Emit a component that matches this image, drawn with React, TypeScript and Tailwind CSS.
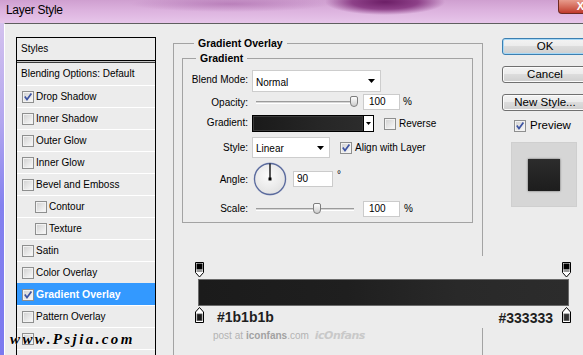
import React from "react";

function Checkbox({ checked = false }: { checked?: boolean }) {
  return (
    <span className="relative block w-[12px] h-[12px] shrink-0 border border-[#8e8f8f] bg-linear-to-br from-[#d0d0d0] to-[#fbfbfb] shadow-[inset_0_0_0_1px_#f2f2f2]">
      {checked ? (
        <svg className="absolute left-0 top-0" width="10" height="10" viewBox="0 0 10 10">
          <path d="M1.8 4.6 L4 7.6 L8.4 1.6" fill="none" stroke="#3d54a3" strokeWidth="1.7" />
        </svg>
      ) : null}
    </span>
  );
}

function Arrow() {
  return (
    <svg width="7" height="4" viewBox="0 0 7 4" className="block shrink-0">
      <path d="M0 0 H7 L3.5 4 Z" fill="#000" />
    </svg>
  );
}

function Label({ children, extra = "" }: { children: React.ReactNode; extra?: string }) {
  return <span className={`w-[65px] shrink-0 text-right ${extra}`}>{children}</span>;
}

function Slider({ size, thumb }: { size: string; thumb: string }) {
  return (
    <div className={`relative h-[16px] shrink-0 ${size}`}>
      <div className="absolute left-0 right-0 top-[7px] h-[3px] border-t border-b border-t-[#9b9b9b] border-b-white bg-[#d6d6d6]" />
      <div
        className={`absolute top-[2px] w-[8px] h-[11px] rounded-t-[2px] rounded-b-[4px] border border-[#7d7d7d] bg-linear-to-b from-[#fdfdfd] to-[#cdcdcd] ${thumb}`}
      />
    </div>
  );
}

function Field({ size, pad, children }: { size: string; pad: string; children: React.ReactNode }) {
  return (
    <div className={`h-[16px] shrink-0 bg-white border border-[#cbcbcb] leading-[14px] ${size} ${pad}`}>
      {children}
    </div>
  );
}

function TopStop() {
  return (
    <svg width="9" height="16" viewBox="0 0 9 16" className="block">
      <path d="M0.5 0.5 H8.5 V10.5 L4.5 15 L0.5 10.5 Z" fill="#fff" stroke="#000" />
      <rect x="1.5" y="1.5" width="6" height="6" fill="#000" />
      <rect x="1.5" y="7.5" width="6" height="2.5" fill="#9a9a9a" />
    </svg>
  );
}

function BottomStop({ color }: { color: string }) {
  return (
    <svg width="9" height="16" viewBox="0 0 9 16" className="block">
      <path d="M4.5 0.5 L8.5 5 V15.5 H0.5 V5 Z" fill="#fff" stroke="#000" />
      <rect x="2" y="7" width="5" height="6.5" fill={color} stroke="#555" strokeWidth="0.8" />
    </svg>
  );
}

const styleRows: { label: string; checked?: boolean; indent?: boolean; active?: boolean }[] = [
  { label: "Drop Shadow", checked: true },
  { label: "Inner Shadow" },
  { label: "Outer Glow" },
  { label: "Inner Glow" },
  { label: "Bevel and Emboss" },
  { label: "Contour", indent: true },
  { label: "Texture", indent: true },
  { label: "Satin" },
  { label: "Color Overlay" },
  { label: "Gradient Overlay", checked: true, active: true },
  { label: "Pattern Overlay" },
  { label: "" },
];

function Button({ children, primary = false }: { children: React.ReactNode; primary?: boolean }) {
  return (
    <div
      className={`h-[17px] w-[86px] rounded-[3px] border text-center text-[11.5px] leading-[15px] text-black bg-[linear-gradient(180deg,#f3f3f3_0%,#ebebeb_50%,#dcdcdc_50%,#cfcfcf_100%)] ${
        primary
          ? "border-[#3c7fb1] shadow-[inset_0_0_0_1px_#a6d8f6]"
          : "border-[#707070] shadow-[inset_0_0_0_1px_#fbfbfb]"
      }`}
    >
      {children}
    </div>
  );
}

export default function App() {
  return (
    <div className="relative w-[583px] h-[355px] overflow-hidden bg-[#ececec] font-['Liberation_Sans',Arial,sans-serif] text-[10px] text-black">
      {/* Title bar */}
      <div className="relative h-[23px] bg-[image:radial-gradient(ellipse_60px_13px_at_385px_2px,#6c1e66_0%,#8d4088_55%,rgba(200,150,200,0)_100%),radial-gradient(ellipse_100px_8px_at_230px_4px,rgba(160,90,160,0.5),rgba(160,90,160,0)),linear-gradient(180deg,#cf9fd0_0%,#dcb2de_45%,#e7c6ea_100%)]">
        <div className="pl-[6px] pt-[3px] text-[12px] leading-[14px] tracking-[-0.3px] text-black">Layer Style</div>
        <div className="absolute right-[-20px] top-0 w-[45px] h-[14px] rounded-bl-[4px] border border-t-0 border-[#6d2a22] bg-linear-to-b from-[#e79b8c] to-[#c0392b] text-center text-[11px] font-bold leading-[13px] text-white">
          X
        </div>
      </div>

      <div className="flex h-[332px]">
        {/* left desktop strip */}
        <div className="w-[4px] shrink-0 bg-[linear-gradient(180deg,#d4c2ee_0%,#b2a6ef_30%,#8481ef_55%,#7b79ef_100%)]" />

        {/* dialog body */}
        <div className="flex flex-1 items-start border-t border-l border-t-[#5f5f5f] border-l-white bg-[#ececec] pl-[11px] pt-[13px]">
          {/* Styles list */}
          <div className="w-[140px] h-[340px] shrink-0 border border-black">
            <div className="h-[22px] pl-[4px] leading-[22px]">Styles</div>
            <div className="h-[1px] bg-black" />
            <div className="h-[1px] bg-[#c4c4c4]" />
            <div className="h-[1px] bg-[#3a3a3a]" />
            <div className="h-[22px] pl-[4px] leading-[21px]">Blending Options: Default</div>
            {styleRows.map((r, i) => (
              <div
                key={i}
                className={`flex h-[22px] items-center border-t ${r.indent ? "pl-[18px]" : "pl-[5px]"} ${
                  r.active ? "border-t-[#3399ff] bg-[#3399ff] text-[10.5px] font-bold text-white" : "border-t-white"
                }`}
              >
                <Checkbox checked={r.checked} />
                {r.label ? <span className="ml-[2px]">{r.label}</span> : null}
              </div>
            ))}
            <div className="h-[22px] border-t border-t-white" />
          </div>

          {/* Gradient Overlay fieldset */}
          <fieldset className="ml-[17px] w-[310px] h-[330px] shrink-0 border border-[#a3a3a3] pl-[8px] pr-[9px]">
            <legend className="ml-[12px] px-[4px] text-[10.5px] font-bold leading-[12px]">Gradient Overlay</legend>
            <fieldset className="mt-[3px] border border-[#a3a3a3] pb-[5px]">
              <legend className="ml-[13px] px-[4px] text-[10.5px] font-bold leading-[12px]">Gradient</legend>

              {/* Blend mode */}
              <div className="mt-[6px] flex h-[22px] items-center">
                <Label extra="mb-[4px]">Blend Mode:</Label>
                <div className="ml-[4px] flex h-[22px] w-[129px] items-center justify-between border border-[#cdcdcd] bg-white pl-[3px] pr-[5px]">
                  <span className="mt-[2px]">Normal</span>
                  <Arrow />
                </div>
              </div>

              {/* Opacity */}
              <div className="mt-[2px] flex h-[16px] items-center">
                <Label>Opacity:</Label>
                <Slider size="ml-[8px] w-[101px]" thumb="left-[94px]" />
                <Field size="ml-[6px] w-[37px]" pad="pl-[5px]">100</Field>
                <span className="ml-[3px] mb-[2px]">%</span>
              </div>

              {/* Gradient */}
              <div className="mt-[5px] flex h-[17px] items-center">
                <Label extra="mb-[2px]">Gradient:</Label>
                <div className="ml-[4px] flex h-[17px] w-[122px] shrink-0 border border-black">
                  <div className="flex-1 border border-[#3a3a3a] bg-[linear-gradient(90deg,#1a1a1a,#262626_60%,#2c2c2c)]" />
                  <div className="flex w-[10px] items-center justify-center border-l border-black bg-white">
                    <svg width="5" height="3" viewBox="0 0 5 3" className="block">
                      <path d="M0 0 H5 L2.5 3 Z" fill="#000" />
                    </svg>
                  </div>
                </div>
                <span className="ml-[10px]">
                  <Checkbox />
                </span>
                <span className="ml-[3px]">Reverse</span>
              </div>

              {/* Style */}
              <div className="mt-[5px] flex h-[21px] items-center">
                <Label>Style:</Label>
                <div className="ml-[4px] flex h-[21px] w-[78px] shrink-0 items-center justify-between border border-[#cdcdcd] bg-white pl-[3px] pr-[5px]">
                  <span className="mt-[2px]">Linear</span>
                  <Arrow />
                </div>
                <span className="ml-[10px]">
                  <Checkbox checked />
                </span>
                <span className="ml-[3px]">Align with Layer</span>
              </div>

              {/* Angle */}
              <div className="mt-[4px] flex h-[34px] items-center">
                <Label>Angle:</Label>
                <svg width="34" height="34" viewBox="0 0 34 34" className="ml-[5px] block shrink-0">
                  <defs>
                    <radialGradient id="dial" cx="45%" cy="40%" r="60%">
                      <stop offset="0%" stopColor="#fbfbfb" />
                      <stop offset="100%" stopColor="#e2e2e2" />
                    </radialGradient>
                  </defs>
                  <circle cx="17" cy="17" r="16" fill="url(#dial)" stroke="#d8dbe6" strokeWidth="1.5" />
                  <circle cx="17" cy="17" r="15.5" fill="none" stroke="#5a6a9c" strokeWidth="1.3" />
                  <line x1="17" y1="17" x2="17" y2="1.5" stroke="#000" strokeWidth="1.3" />
                  <rect x="15.5" y="15.5" width="3" height="3" fill="#000" />
                </svg>
                <Field size="ml-[6px] w-[40px]" pad="pl-[3px]">90</Field>
                <span className="ml-[4px] self-start mt-[8px] leading-[10px]">°</span>
              </div>

              {/* Scale */}
              <div className="mt-[5px] flex h-[16px] items-center">
                <Label extra="mb-[1px]">Scale:</Label>
                <Slider size="ml-[8px] w-[98px]" thumb="left-[57px]" />
                <Field size="ml-[9px] w-[37px]" pad="pl-[5px]">100</Field>
                <span className="ml-[4px] mb-[2px]">%</span>
              </div>
            </fieldset>
          </fieldset>

          {/* Right column */}
          <div className="ml-[19px] mt-[1px] flex w-[86px] shrink-0 flex-col">
            <Button primary>OK</Button>
            <div className="mt-[11px]">
              <Button>Cancel</Button>
            </div>
            <div className="mt-[11px]">
              <Button>New Style...</Button>
            </div>
            <div className="ml-[12px] mt-[8px] flex h-[13px] items-center">
              <Checkbox checked />
              <span className="ml-[4px] text-[11.5px] leading-[13px]">Preview</span>
            </div>
            <div className="ml-[9px] mt-[10px] flex h-[65px] w-[66px] items-center justify-center border border-[#cfcfcf] bg-[#d6d6d6]">
              <div className="h-[32px] w-[32px] bg-linear-to-b from-[#2c2c2c] to-[#1d1d1d] shadow-[0_0_2px_rgba(0,0,0,0.55)]" />
            </div>
          </div>
        </div>
      </div>

      {/* Gradient editor pasted over the dialog */}
      <div className="absolute left-[188px] top-[256px] h-[72px] w-[400px] bg-[#ececec]">
        <div className="ml-[7px] mt-[6px] flex w-[376px] justify-between">
          <TopStop />
          <TopStop />
        </div>
        <div className="ml-[10px] mt-[1px] h-[27px] w-[371px] border border-[#6a6a6a] bg-[linear-gradient(90deg,#1b1b1b_0%,#1f1f1f_40%,#292929_70%,#2c2c2c_100%)]" />
        <div className="ml-[7px] mt-[1px] flex w-[376px] items-start">
          <BottomStop color="#1b1b1b" />
          <span className="ml-[13px] mt-[2px] text-[14px] font-bold leading-[16px] text-[#1e1e1e]">#1b1b1b</span>
          <span className="flex-1" />
          <span className="mt-[3px] text-[14px] font-bold leading-[16px] text-[#1e1e1e]">#333333</span>
          <span className="ml-[9px]">
            <BottomStop color="#333333" />
          </span>
        </div>
      </div>

      {/* credit line */}
      <div className="absolute left-[213px] top-[330px] flex items-baseline text-[10px] leading-[12px] text-[#b3b3b3]">
        <span>post at </span>
        <span className="ml-[3px] font-bold text-[#a2a2a2]">iconfans</span>
        <span>.com</span>
        <span className="ml-[6px] font-['DejaVu_Sans',sans-serif] text-[11px] font-bold italic tracking-[-0.5px] text-[#c9c9c9]">
          icOnfans
        </span>
      </div>

      {/* watermark */}
      <div className="absolute left-[10px] top-[331px] font-['Liberation_Serif',serif] text-[15px] font-bold italic leading-[16px] tracking-[2.4px] text-black [text-shadow:0_0_1px_#fff]">
        www.Psjia.com
      </div>
    </div>
  );
}
